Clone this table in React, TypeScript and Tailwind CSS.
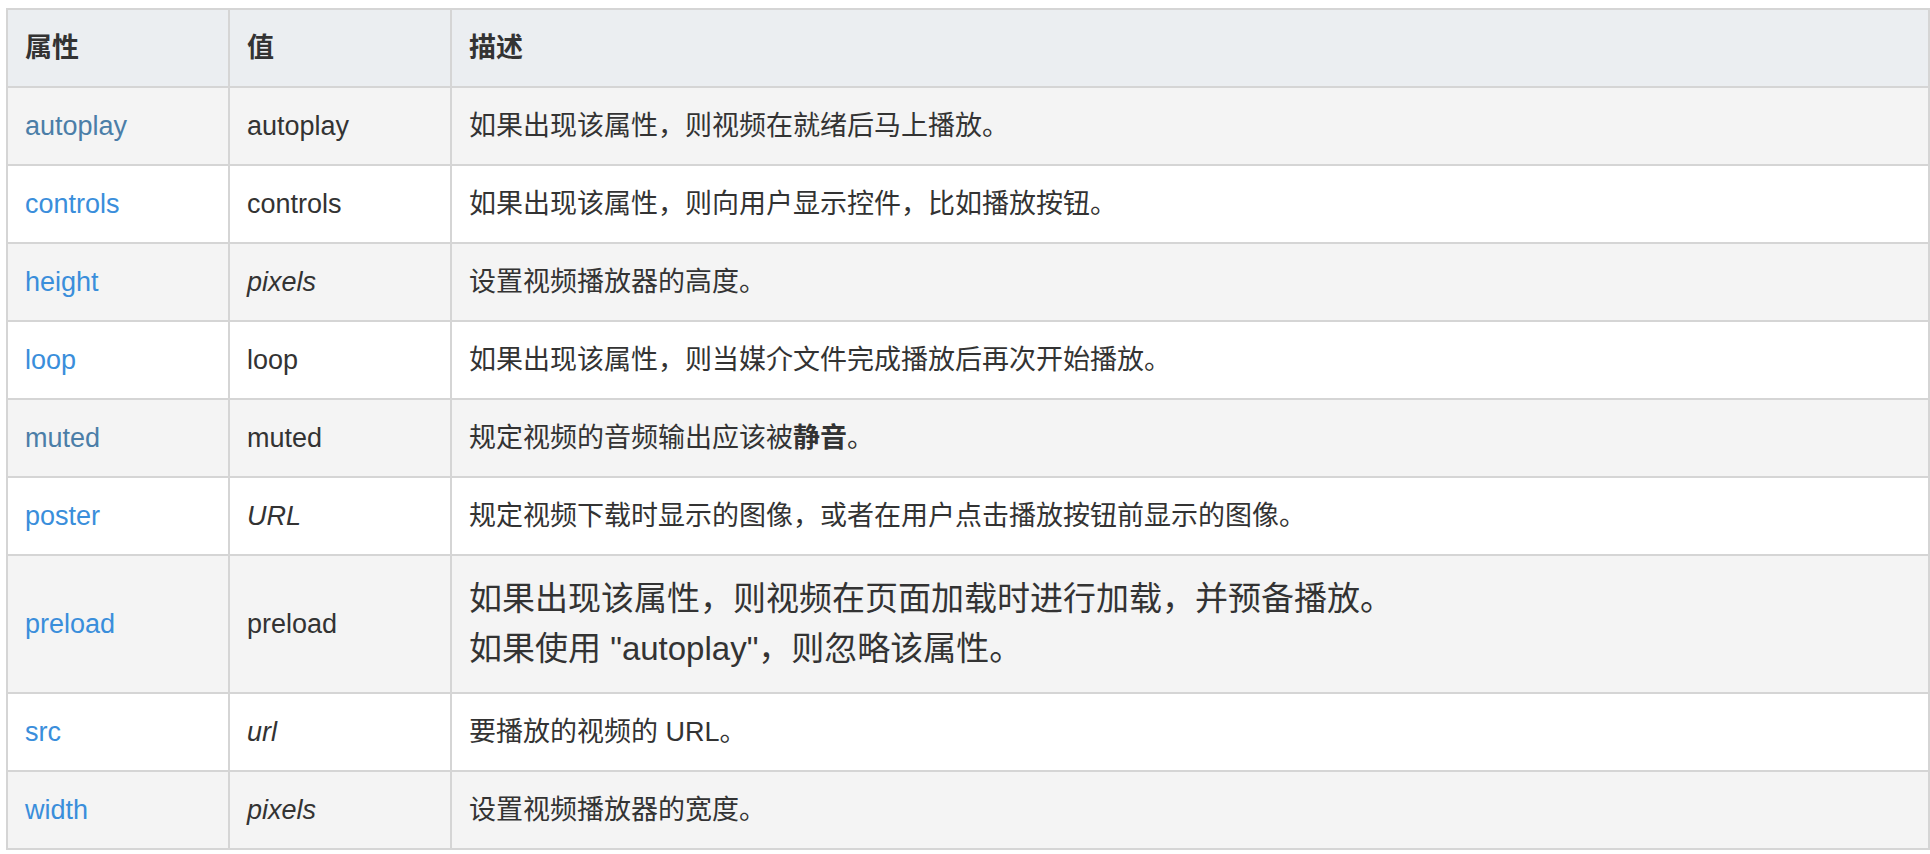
import { ReactNode } from "react";

type Row = {
  name: string;
  visited?: boolean;
  value: string;
  italic?: boolean;
  desc: ReactNode;
  big?: boolean;
};

const rows: Row[] = [
  { name: "autoplay", visited: true, value: "autoplay", desc: "如果出现该属性，则视频在就绪后马上播放。" },
  { name: "controls", value: "controls", desc: "如果出现该属性，则向用户显示控件，比如播放按钮。" },
  { name: "height", value: "pixels", italic: true, desc: "设置视频播放器的高度。" },
  { name: "loop", value: "loop", desc: "如果出现该属性，则当媒介文件完成播放后再次开始播放。" },
  {
    name: "muted",
    visited: true,
    value: "muted",
    desc: (
      <>
        规定视频的音频输出应该被<b className="font-bold">静音</b>。
      </>
    ),
  },
  { name: "poster", value: "URL", italic: true, desc: "规定视频下载时显示的图像，或者在用户点击播放按钮前显示的图像。" },
  {
    name: "preload",
    value: "preload",
    big: true,
    desc: (
      <>
        如果出现该属性，则视频在页面加载时进行加载，并预备播放。
        <br />
        如果使用 "autoplay"，则忽略该属性。
      </>
    ),
  },
  { name: "src", value: "url", italic: true, desc: "要播放的视频的 URL。" },
  { name: "width", value: "pixels", italic: true, desc: "设置视频播放器的宽度。" },
];

const cell = "border-2 border-[#d5d5d5] px-[17px] py-[18px] text-left align-middle";

export default function App() {
  return (
    <div className="min-h-screen bg-white pl-[6px] pt-[8px] font-['Liberation_Sans','Noto_Sans_CJK_SC',sans-serif] text-[27px] leading-[40px] text-[#333]">
      <table className="w-[1924px] table-fixed border-collapse border-2 border-[#d5d5d5]">
        <colgroup>
          <col className="w-[222px]" />
          <col className="w-[222px]" />
          <col />
        </colgroup>
        <thead>
          <tr className="bg-[#ebeef1]">
            <th className={`${cell} font-bold`}>属性</th>
            <th className={`${cell} font-bold`}>值</th>
            <th className={`${cell} font-bold`}>描述</th>
          </tr>
        </thead>
        <tbody>
          {rows.map((r, i) => (
            <tr key={r.name} className={i % 2 === 0 ? "bg-[#f4f4f4]" : "bg-white"}>
              <td className={cell}>
                <a className={r.visited ? "text-[#4b7ea8]" : "text-[#3a8edb]"}>{r.name}</a>
              </td>
              <td className={`${cell} ${r.italic ? "italic" : ""}`}>{r.value}</td>
              <td className={`${cell} ${r.big ? "text-[33px] leading-[50px]" : ""}`}>{r.desc}</td>
            </tr>
          ))}
        </tbody>
      </table>
    </div>
  );
}
